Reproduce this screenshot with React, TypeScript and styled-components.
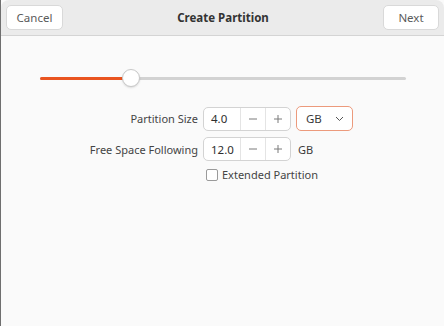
import React from 'react';
import styled, { createGlobalStyle } from 'styled-components';

const GlobalStyle = createGlobalStyle`
  html, body {
    margin: 0;
    padding: 0;
    background: #fafafa;
  }
  * {
    box-sizing: border-box;
  }
  body {
    font-family: "Noto Sans", "Open Sans", sans-serif;
    font-size: 11px;
    color: #3d3d3d;
  }
`;

const Window = styled('div')`
  width: 444px;
  height: 326px;
  display: flex;
  flex-direction: column;
  background: #fafafa;
  border-left: 1px solid #6f6f6f;
  overflow: hidden;
`;

const HeaderBar = styled('header')`
  height: 36px;
  flex: none;
  display: flex;
  align-items: center;
  justify-content: space-between;
  padding: 0 5px 0 5px;
  background: #ebebeb;
  border-bottom: 1px solid #d4d4d4;
  border-top-left-radius: 8px;
  border-top-right-radius: 8px;
`;

const HeaderButton = styled('button')<{ $width: number }>`
  width: ${({ $width }) => $width}px;
  height: 25px;
  margin-top: -1px;
  background: #ffffff;
  border: 1px solid #d9d9d9;
  border-radius: 5px;
  font-family: inherit;
  font-size: 11.5px;
  color: #5a5a5a;
  padding: 0;
`;

const Title = styled('h1')`
  margin: 0;
  font-size: 11.5px;
  font-weight: 700;
  color: #333333;
`;

const Content = styled('main')`
  flex: 1;
  display: flex;
  flex-direction: column;
  padding: 32px 38px 0 39px;
`;

const SliderWrap = styled('div')`
  position: relative;
  height: 20px;
  display: flex;
  align-items: center;
`;

const Track = styled('div')`
  width: 100%;
  height: 3px;
  border-radius: 2px;
  background: #d2d2d2;
  overflow: hidden;
`;

const Fill = styled('div')`
  height: 100%;
  background: #e95420;
`;

const Knob = styled('div')`
  position: absolute;
  top: 1px;
  width: 18px;
  height: 18px;
  margin-left: -9px;
  border-radius: 50%;
  background: #ffffff;
  border: 1px solid #c8c8c8;
  box-shadow: 0 1px 2px rgba(0, 0, 0, 0.12);
`;

const Form = styled('div')`
  margin-top: 18px;
  margin-left: -32px;
  display: grid;
  grid-template-columns: 190px auto;
  column-gap: 5px;
  row-gap: 6px;
  align-items: center;
`;

const Label = styled('label')`
  text-align: right;
  color: #444444;
  white-space: nowrap;
`;

const Controls = styled('div')`
  display: flex;
  align-items: center;
  gap: 5px;
`;

const SpinBox = styled('div')`
  display: flex;
  height: 24px;
  background: #ffffff;
  border: 1px solid #d3d3d3;
  border-radius: 5px;
  overflow: hidden;
`;

const SpinEntry = styled('div')`
  width: 36px;
  display: flex;
  align-items: center;
  padding-left: 7px;
  color: #2e2e2e;
  font-size: 11.5px;
`;

const SpinButton = styled('div')`
  width: 25px;
  display: flex;
  align-items: center;
  justify-content: center;
  border-left: 1px solid #e4e4e4;
  color: #7a7a7a;
  font-size: 14px;
`;

const Dropdown = styled('div')`
  width: 57px;
  height: 25px;
  display: flex;
  align-items: center;
  justify-content: space-between;
  padding: 0 8px 0 9px;
  background: #ffffff;
  border: 1px solid #ec9a7c;
  border-radius: 5px;
  color: #3a3a3a;
  font-size: 11.5px;
`;

const Unit = styled('span')`
  margin-left: 2px;
  color: #3a3a3a;
`;

const CheckRow = styled('div')`
  display: flex;
  align-items: center;
  gap: 4px;
  padding-left: 3px;
  color: #444444;
`;

const CheckBox = styled('span')`
  width: 12px;
  height: 12px;
  border: 1px solid #9a9a9a;
  border-radius: 2px;
  background: #ffffff;
`;

const Spin = ({ value }: { value: string }) => (
  <SpinBox>
    <SpinEntry>{value}</SpinEntry>
    <SpinButton>
      <svg width="10" height="10" viewBox="0 0 10 10">
        <path d="M1 5h8" stroke="#7a7a7a" strokeWidth="1" />
      </svg>
    </SpinButton>
    <SpinButton>
      <svg width="10" height="10" viewBox="0 0 10 10">
        <path d="M1 5h8M5 1v8" stroke="#7a7a7a" strokeWidth="1" />
      </svg>
    </SpinButton>
  </SpinBox>
);

export default function App() {
  const percent = 24.9;
  return (
    <>
      <GlobalStyle />
      <Window>
        <HeaderBar>
          <HeaderButton $width={57}>Cancel</HeaderButton>
          <Title>Create Partition</Title>
          <HeaderButton $width={56}>Next</HeaderButton>
        </HeaderBar>
        <Content>
          <SliderWrap>
            <Track>
              <Fill style={{ width: `${percent}%` }} />
            </Track>
            <Knob style={{ left: `${percent}%` }} />
          </SliderWrap>
          <Form>
            <Label>Partition Size</Label>
            <Controls>
              <Spin value="4.0" />
              <Dropdown>
                GB
                <svg width="9" height="6" viewBox="0 0 9 6">
                  <path d="M1 1l3.5 3.5L8 1" fill="none" stroke="#555" strokeWidth="1" />
                </svg>
              </Dropdown>
            </Controls>
            <Label>Free Space Following</Label>
            <Controls>
              <Spin value="12.0" />
              <Unit>GB</Unit>
            </Controls>
            <span />
            <CheckRow>
              <CheckBox />
              Extended Partition
            </CheckRow>
          </Form>
        </Content>
      </Window>
    </>
  );
}
